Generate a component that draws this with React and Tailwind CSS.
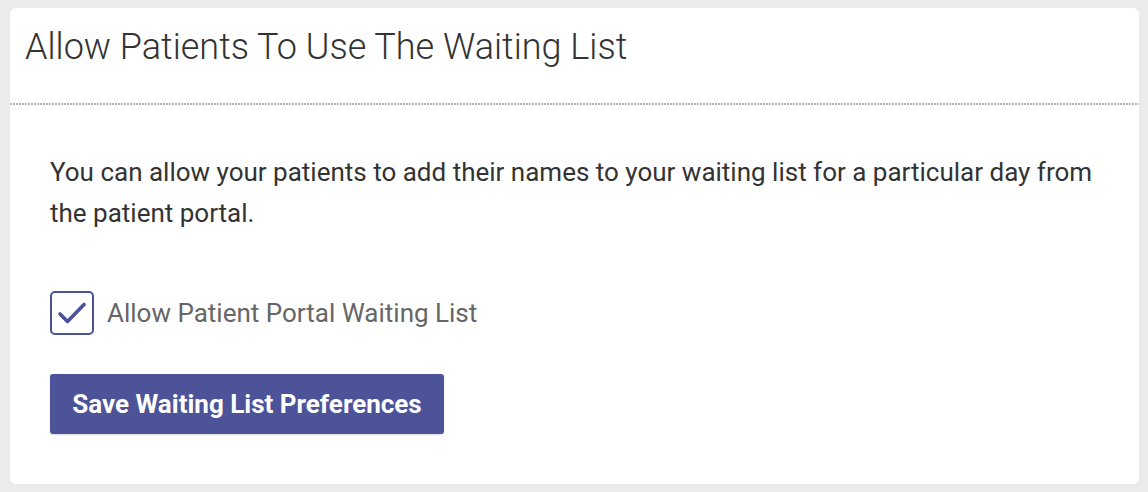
import { useState } from "react";

const App = () => {
  const [allowed, setAllowed] = useState(true);

  return (
    <div className="min-h-screen bg-[#ebebeb] pt-2 pl-[10px] pr-[9px] pb-2 font-['Roboto',_'Liberation_Sans',_sans-serif]">
      <section className="bg-white rounded-md h-[476px]">
        {/* Header */}
        <div className="h-[95px] pl-[15px] pt-[18px]">
          <h2 className="text-[36px] font-light text-[#333] leading-[1.172]">
            Allow Patients To Use The Waiting List
          </h2>
        </div>
        <div className="h-[2px] bg-[repeating-linear-gradient(to_right,#b5b5b5_0_2px,transparent_2px_3px)]" />

        {/* Body */}
        <div className="pl-10 pr-10 pt-[47px]">
          <p className="text-[26px] leading-[41px] text-[#333]">
            You can allow your patients to add their names to your waiting list for a particular day from the patient portal.
          </p>

          <label className="mt-[57px] flex items-center gap-[13px] cursor-pointer select-none">
            <button
              type="button"
              onClick={() => setAllowed(!allowed)}
              className="w-[44px] h-[44px] rounded-[5px] border-2 border-[#4b5299] bg-white flex items-center justify-center"
            >
              {allowed && (
                <svg width="32" height="26" viewBox="0 0 32 26" fill="none">
                  <path d="M4 14 L11.5 21.5 L28 4.5" stroke="#4b5299" strokeWidth="3.6" strokeLinecap="round" strokeLinejoin="round" />
                </svg>
              )}
            </button>
            <span className="text-[26px] text-[#666]">Allow Patient Portal Waiting List</span>
          </label>

          <button className="mt-[39px] h-[60px] w-[394px] rounded-[3px] bg-[#4c5399] text-white text-[26px] font-bold shadow-[0_1px_2px_rgba(0,0,0,0.15)]">
            Save Waiting List Preferences
          </button>
        </div>
      </section>
    </div>
  );
};

export default App;
